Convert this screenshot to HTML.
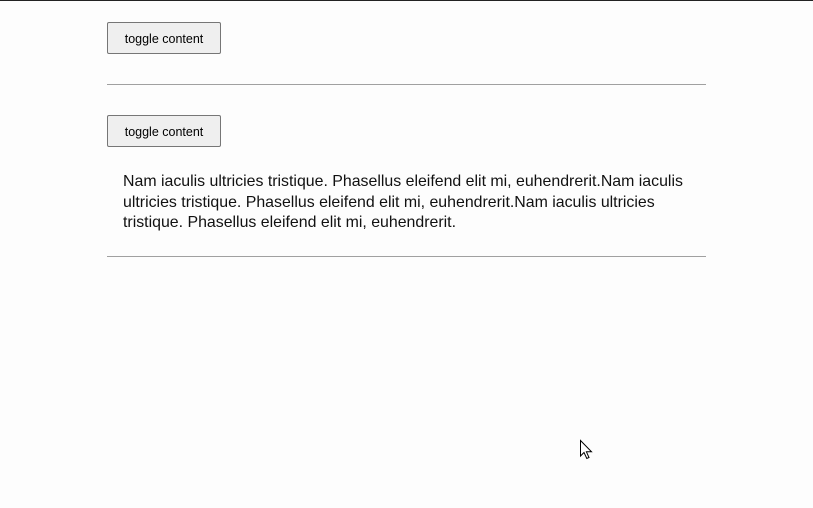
<!DOCTYPE html>
<html><head><style>
html,body{margin:0;padding:0;background:#fdfdfd;width:813px;height:508px;overflow:hidden;position:relative}
body{border-top:1px solid #222;box-sizing:border-box;font-family:"Liberation Sans",sans-serif}
.btn{position:absolute;left:107px;width:114px;height:32px;box-sizing:border-box;border:1px solid #767676;border-radius:2px;background:#efefef;font-size:12.5px;color:#000;text-align:center;line-height:32px}
.hr{position:absolute;left:107px;width:599px;height:1px;background:#a0a0a0}
.txt{position:absolute;left:123px;top:171px;font-size:15.9px;line-height:20.5px;color:#111;white-space:nowrap}
</style></head><body>
<div class="btn" style="top:21px">toggle content</div>
<div class="hr" style="top:83px"></div>
<div class="btn" style="top:114px">toggle content</div>
<div class="txt">Nam iaculis ultricies tristique. Phasellus eleifend elit mi, euhendrerit.Nam iaculis<br>ultricies tristique. Phasellus eleifend elit mi, euhendrerit.Nam iaculis ultricies<br>tristique. Phasellus eleifend elit mi, euhendrerit.</div>
<div class="hr" style="top:255px"></div>
<svg style="position:absolute;left:579px;top:438px" width="16" height="22" viewBox="0 0 16 22"><path d="M1.5 1.5 L1.5 17 L5 13.5 L7.8 19.5 L10 18.5 L7.4 12.8 L12.5 12.8 Z" fill="#fff" stroke="#000" stroke-width="1"/></svg>
</body></html>
